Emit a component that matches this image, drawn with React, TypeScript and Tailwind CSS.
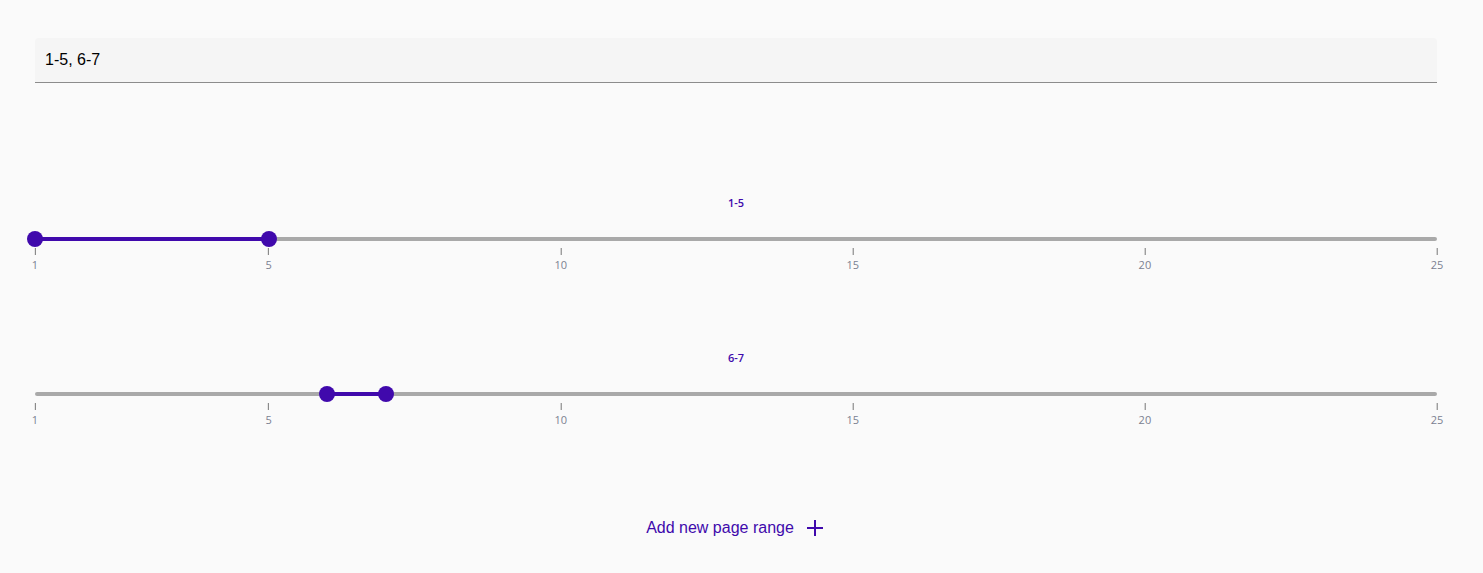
import React from "react";

const MIN = 1;
const MAX = 25;
const TICKS = [1, 5, 10, 15, 20, 25];
const PURPLE = "#4009ac";

const pct = (v: number) => ((v - MIN) / (MAX - MIN)) * 100;

const RangeSlider = ({ from, to }: { from: number; to: number }) => {
  return (
    <div className="flex flex-col">
      <div className="h-[16px] text-center text-[11px] leading-[16px] font-semibold text-[#4009ac] [font-family:'Open_Sans','Noto_Sans',sans-serif]">
        {from}-{to}
      </div>

      <div className="relative mt-[20px] h-[16px]">
        <div className="absolute left-0 right-0 top-[6px] h-[4px] rounded-full bg-[#a9a9a9]" />
        <div
          className="absolute top-[6px] h-[4px] bg-[#4009ac]"
          style={{ left: `${pct(from)}%`, width: `${pct(to) - pct(from)}%` }}
        />
        {[from, to].map((v) => (
          <div
            key={v}
            className="absolute top-0 h-[16px] w-[16px] -translate-x-1/2 rounded-full bg-[#4009ac]"
            style={{ left: `${pct(v)}%` }}
          />
        ))}
      </div>

      <div className="relative mt-[1px] h-[24px]">
        {TICKS.map((t) => (
          <div
            key={t}
            className="absolute top-0 flex -translate-x-1/2 flex-col items-center"
            style={{ left: `${pct(t)}%` }}
          >
            <div className="h-[7px] w-px bg-[#777]" />
            <span className="mt-[3px] text-[11px] leading-[14px] text-[#7b8191] [font-family:'Open_Sans','Noto_Sans',sans-serif]">
              {t}
            </span>
          </div>
        ))}
      </div>
    </div>
  );
};

export default function App() {
  return (
    <div className="min-h-[573px] bg-[#fafafa] pl-[35px] pr-[46px] pt-[38px] [font-family:'Liberation_Sans',Arial,sans-serif]">
      <div className="flex h-[45px] items-center rounded-t-[4px] border-b border-[#8c8c8c] bg-[#f5f5f5] pl-[10px] text-[16px] text-black">
        1-5, 6-7
      </div>

      <div className="mt-[112px]">
        <RangeSlider from={1} to={5} />
      </div>
      <div className="mt-[78px]">
        <RangeSlider from={6} to={7} />
      </div>

      <div className="mt-[91px] flex items-center justify-center gap-[12px] pr-[2px]">
        <span className="text-[16px] leading-[20px]" style={{ color: PURPLE }}>
          Add new page range
        </span>
        <svg width="18" height="18" viewBox="0 0 18 18" fill="none" stroke={PURPLE} strokeWidth="2">
          <line x1="9" y1="1" x2="9" y2="17" />
          <line x1="1" y1="9" x2="17" y2="9" />
        </svg>
      </div>
    </div>
  );
}
